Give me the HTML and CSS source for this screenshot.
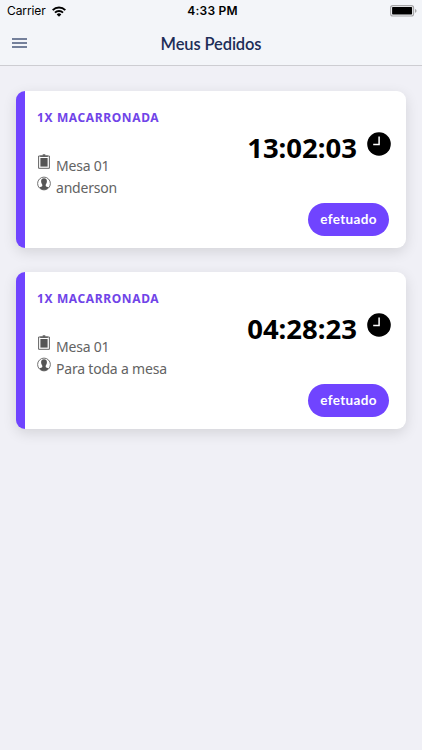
FILE: index.html
```html
<!DOCTYPE html>
<html lang="pt-BR">
<head>
<meta charset="utf-8">
<meta name="viewport" content="width=device-width, initial-scale=1">
<title>Meus Pedidos</title>
<link rel="stylesheet" href="styles.css">
</head>
<body>
<svg class="defs" aria-hidden="true">
  <symbol id="clipboard" viewBox="0 0 14 15">
    <path d="M1.600 2h10.800v12.300H1.600z" fill="none" stroke="#636363" stroke-width="1"/>
    <path d="M3.400 4h7.200v8.600H3.400z" fill="#555"/>
    <path d="M3.200 1.500h7.600v1.400H3.200zM5.700.2h2.600v2H5.700z" fill="#636363"/>
  </symbol>
  <symbol id="person" viewBox="0 0 14 14">
    <circle cx="7" cy="7" r="6.400" fill="none" stroke="#636363" stroke-width=".9"/>
    <path d="M7 1.700C5.200 1.700 4 2.900 4.100 4.800c.1 1.700.6 2.700 1.200 3.400v1.300c-.4.800-1.800.9-2.800 1.500C3.700 12.500 5.200 13.300 7 13.300s3.300-.8 4.500-2.300c-1-.6-2.400-.7-2.800-1.500V8.200c.6-.7 1.100-1.700 1.200-3.400C10 2.900 8.800 1.700 7 1.700z" fill="#555"/>
  </symbol>
  <symbol id="clock" viewBox="0 0 24 24">
    <circle cx="12" cy="12" r="11.8"/>
    <path d="M12.100 4.500v8.100H6.200" fill="none" stroke="#fff" stroke-width="1.500"/>
  </symbol>
</svg>
<header class="header">
  <div class="status">
    <div class="carrier"><span>Carrier</span>
      <svg class="wifi" viewBox="0 0 14 11"><g fill="none" stroke="#000" stroke-width="2"><path d="M.7 4.100a9 9 0 0 1 12.600 0"/><path d="M3 6.600a5.700 5.700 0 0 1 8 0"/></g><path d="M4.700 8.400a3.300 3.300 0 0 1 4.600 0L7 10.800z"/></svg>
    </div>
    <time class="clock">4:33 PM</time>
    <svg class="battery" viewBox="0 0 27 12"><rect x=".6" y=".6" width="23" height="10.400" rx="2.300" fill="#f3f4f8" stroke="#a6a6a8" stroke-width="1.100"/><rect x="2.100" y="2.100" width="20" height="7.400" rx=".7"/><path d="M25 4c2 .4 2 3.200 0 3.700z" fill="#a6a6a8"/></svg>
  </div>
  <nav class="nav">
    <svg class="menu" viewBox="0 0 15 10"><path d="M0 1h15M0 5h15M0 9h15" stroke="#4b5a7c" stroke-width="1.300"/></svg>
    <h1 class="title">Meus Pedidos</h1>
  </nav>
</header>
<main class="orders">
  <article class="card">
    <h2 class="name">1X MACARRONADA</h2>
    <div class="details">
      <ul class="info">
        <li><svg class="icon"><use href="#clipboard"/></svg><span>Mesa 01</span></li>
        <li><svg class="icon"><use href="#person"/></svg><span>anderson</span></li>
      </ul>
      <div class="timer"><span>13:02:03</span><svg class="dial"><use href="#clock"/></svg></div>
    </div>
    <span class="badge">efetuado</span>
  </article>
  <article class="card">
    <h2 class="name">1X MACARRONADA</h2>
    <div class="details">
      <ul class="info">
        <li><svg class="icon"><use href="#clipboard"/></svg><span>Mesa 01</span></li>
        <li><svg class="icon"><use href="#person"/></svg><span>Para toda a mesa</span></li>
      </ul>
      <div class="timer"><span>04:28:23</span><svg class="dial"><use href="#clock"/></svg></div>
    </div>
    <span class="badge">efetuado</span>
  </article>
</main>
</body>
</html>
```
FILE: styles.css
```css
* { box-sizing: border-box; margin: 0; padding: 0; }
body {
  min-height: 750px;
  background: #f0f0f6;
  font-family: "Noto Sans", sans-serif;
}
svg { display: block; flex: none; }
.defs { width: 0; height: 0; }
.header {
  height: 66px;
  background: #f3f5f9;
  border-bottom: 1px solid #cdcdd2;
}
.status {
  display: grid;
  grid-template-columns: 1fr auto 1fr;
  align-items: center;
  height: 22px;
  padding: 0 5px 0 7px;
  font: 12px/22px Inter, sans-serif;
}
.carrier { display: flex; align-items: center; gap: 6px; letter-spacing: -.1px; }
.wifi { width: 14px; height: 11px; }
.clock { font-weight: 600; font-size: 12px; letter-spacing: .2px; padding-left: 1px; }
.battery { width: 27px; height: 12px; justify-self: end; }
.nav {
  display: grid;
  grid-template-columns: 1fr auto 1fr;
  align-items: center;
  height: 43px;
  padding: 0 12px;
}
.menu { width: 15px; height: 10px; margin-bottom: 2px; }
.title {
  font: 600 16.500px/22px Lato, sans-serif;
  color: #1d2d57;
  letter-spacing: -.12px;
}
.orders {
  display: flex;
  flex-direction: column;
  gap: 24px;
  padding: 25px 16px 0;
}
.card {
  display: flex;
  flex-direction: column;
  height: 157px;
  padding: 17px 15px 12px 12px;
  border-left: 9px solid #7044ff;
  border-radius: 9px;
  background: #fff;
  box-shadow: 0 4px 14px rgba(0, 0, 0, .12);
}
.name {
  font-size: 12px;
  line-height: 20px;
  font-weight: 700;
  letter-spacing: .62px;
  color: #7044e8;
}
.details { display: flex; justify-content: space-between; margin-top: 3px; height: 81px; }
.info { list-style: none; padding-top: 23px; color: #636363; font-size: 14px; line-height: 23px; letter-spacing: -.2px; }
.info li { display: flex; gap: 5px; height: 22px; }
.icon { width: 14px; height: 15px; }
.timer { display: flex; gap: 10px; font-size: 27.500px; line-height: 34px; font-weight: 700; color: #000; }
.dial { width: 24px; height: 24px; margin-top: 1px; }
.badge {
  align-self: flex-end;
  width: 81px;
  height: 33px;
  flex: none;
  margin: -9px 2px 0 0;
  border-radius: 17px;
  background: #7044ff;
  color: #fff;
  font: 700 13.500px/32px Lato, sans-serif;
  letter-spacing: .35px;
  text-align: center;
}
```
